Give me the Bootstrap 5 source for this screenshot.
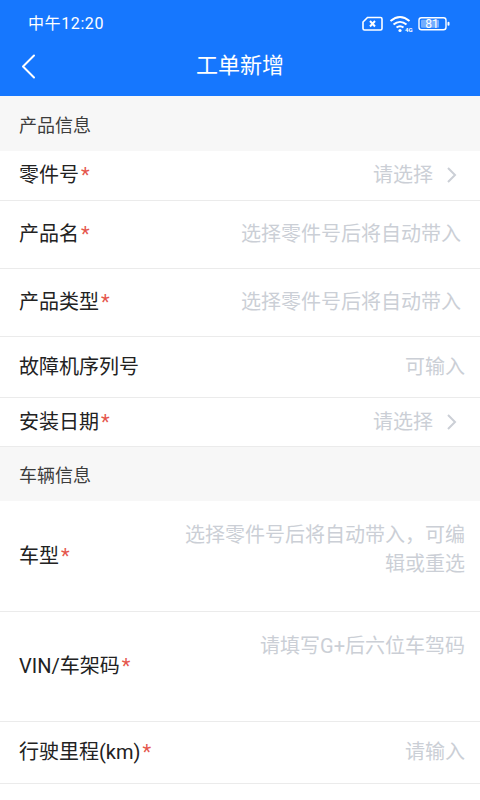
<!DOCTYPE html>
<html lang="zh">
<head>
<meta charset="utf-8">
<title>工单新增</title>
<link rel="stylesheet" href="https://cdn.jsdelivr.net/npm/bootstrap@5.3.0/dist/css/bootstrap.min.css">
<style>
html,body{height:800px;overflow:hidden}
body{font-family:Roboto,"Noto Sans CJK SC",sans-serif;background:#fff;color:#222}
.app-top{background:#1677fe;color:#fff;height:96px}
.status-bar{height:47px;padding:0 30px 0 28px}
.status-time{font:400 16px/1 Roboto,"Noto Sans CJK SC",sans-serif;letter-spacing:.6px}
.nav-bar{height:49px;padding:0 19px 10px 21px}
.nav-title{font-size:22px;line-height:28px;left:0;right:0;top:5px;text-align:center}
.sect-head{background:#f7f7f7;font-size:18px;line-height:1;color:#3c3c3c;padding:4px 0 0 19px}
.form-line{border-bottom:1px solid #ebebeb;padding:0 15px 1px 19px;font-size:20px;line-height:30px}
.req{color:#e5574d;margin-left:2px;font-size:20px;line-height:20px}
.hint{color:#cbcfd6;text-align:right}
.chev{margin-left:13px;margin-right:8px}
.h55{height:55px}.h54{height:54px}.h50{height:50px}.h49{height:49px}.h68{height:68px}.h61{height:61px}.h62{height:62px}.h111{height:111px}.h110{height:110px}
.hint-wide{width:285px}
.hint-top{align-self:flex-start;line-height:29px;padding-top:20px}
</style>
</head>
<body>
<header class="app-top">
  <div class="status-bar d-flex align-items-center justify-content-between">
    <span class="status-time">中午12:20</span>
    <svg width="88" height="18" viewBox="0 0 88 18" fill="none" stroke="#fff">
      <path d="M5.500 2.500H18.500a1.500 1.500 0 0 1 1.500 1.500v9.500a1.500 1.500 0 0 1-1.500 1.500H2.500a1.500 1.500 0 0 1-1.500-1.500V7z" stroke-width="1.600"/>
      <path d="M8 6l5 5.500M13 6l-5 5.500" stroke-width="2"/>
      <path d="M28.500 6c6-5 13-5 19 0M31.500 9.500c4-3.500 9-3.500 13 0M34.500 12.500c2-1.500 5-1.500 7 0" stroke-width="2"/>
      <circle cx="38" cy="15.500" r="1.600" fill="#fff" stroke="none"/>
      <text x="43" y="17" font-family="Roboto" font-size="6" font-weight="700" fill="#fff" stroke="none">4G</text>
      <rect x="57" y="2.700" width="27" height="12" rx="2.500" stroke-width="1.400"/>
      <rect x="59" y="4.700" width="18" height="8" rx="1" fill="#fff" fill-opacity=".4" stroke="none"/>
      <rect x="85.500" y="6.700" width="2" height="4" rx="1" fill="#fff" stroke="none"/>
      <text x="70" y="13" font-family="Roboto" font-size="12" fill="#fff" stroke="none" text-anchor="middle">81</text>
    </svg>
  </div>
  <div class="nav-bar position-relative d-flex align-items-center">
    <svg width="15" height="25" viewBox="0 0 15 25" fill="none" stroke="#fff" stroke-width="2" stroke-linecap="round" stroke-linejoin="round"><path d="M13 1.500L2 12.500l11 11"/></svg>
    <div class="nav-title position-absolute">工单新增</div>
  </div>
</header>
<main>
  <div class="sect-head h55 d-flex align-items-center">产品信息</div>
  <div class="form-line h50 d-flex align-items-center justify-content-between">
    <div>零件号<span class="req">*</span></div>
    <div class="hint d-flex align-items-center">请选择<svg class="chev" width="11" height="18" viewBox="0 0 11 18" fill="none" stroke="#cbcfd6" stroke-width="2"><path d="M2 2l7 7-7 7"/></svg></div>
  </div>
  <div class="form-line h68 d-flex align-items-center justify-content-between">
    <div>产品名<span class="req">*</span></div>
    <div class="hint me-1">选择零件号后将自动带入</div>
  </div>
  <div class="form-line h68 d-flex align-items-center justify-content-between">
    <div>产品类型<span class="req">*</span></div>
    <div class="hint me-1">选择零件号后将自动带入</div>
  </div>
  <div class="form-line h61 d-flex align-items-center justify-content-between">
    <div>故障机序列号</div>
    <div class="hint">可输入</div>
  </div>
  <div class="form-line h49 d-flex align-items-center justify-content-between">
    <div>安装日期<span class="req">*</span></div>
    <div class="hint d-flex align-items-center">请选择<svg class="chev" width="11" height="18" viewBox="0 0 11 18" fill="none" stroke="#cbcfd6" stroke-width="2"><path d="M2 2l7 7-7 7"/></svg></div>
  </div>
  <div class="sect-head h54 d-flex align-items-center">车辆信息</div>
  <div class="form-line h111 d-flex align-items-center justify-content-between">
    <div>车型<span class="req">*</span></div>
    <div class="hint hint-wide hint-top">选择零件号后将自动带入，可编辑或重选</div>
  </div>
  <div class="form-line h110 d-flex align-items-center justify-content-between">
    <div>VIN/车架码<span class="req">*</span></div>
    <div class="hint hint-top">请填写G+后六位车驾码</div>
  </div>
  <div class="form-line h62 d-flex align-items-center justify-content-between">
    <div>行驶里程(km)<span class="req">*</span></div>
    <div class="hint">请输入</div>
  </div>
</main>
<script src="https://cdn.jsdelivr.net/npm/bootstrap@5.3.0/dist/js/bootstrap.bundle.min.js"></script>
</body>
</html>
